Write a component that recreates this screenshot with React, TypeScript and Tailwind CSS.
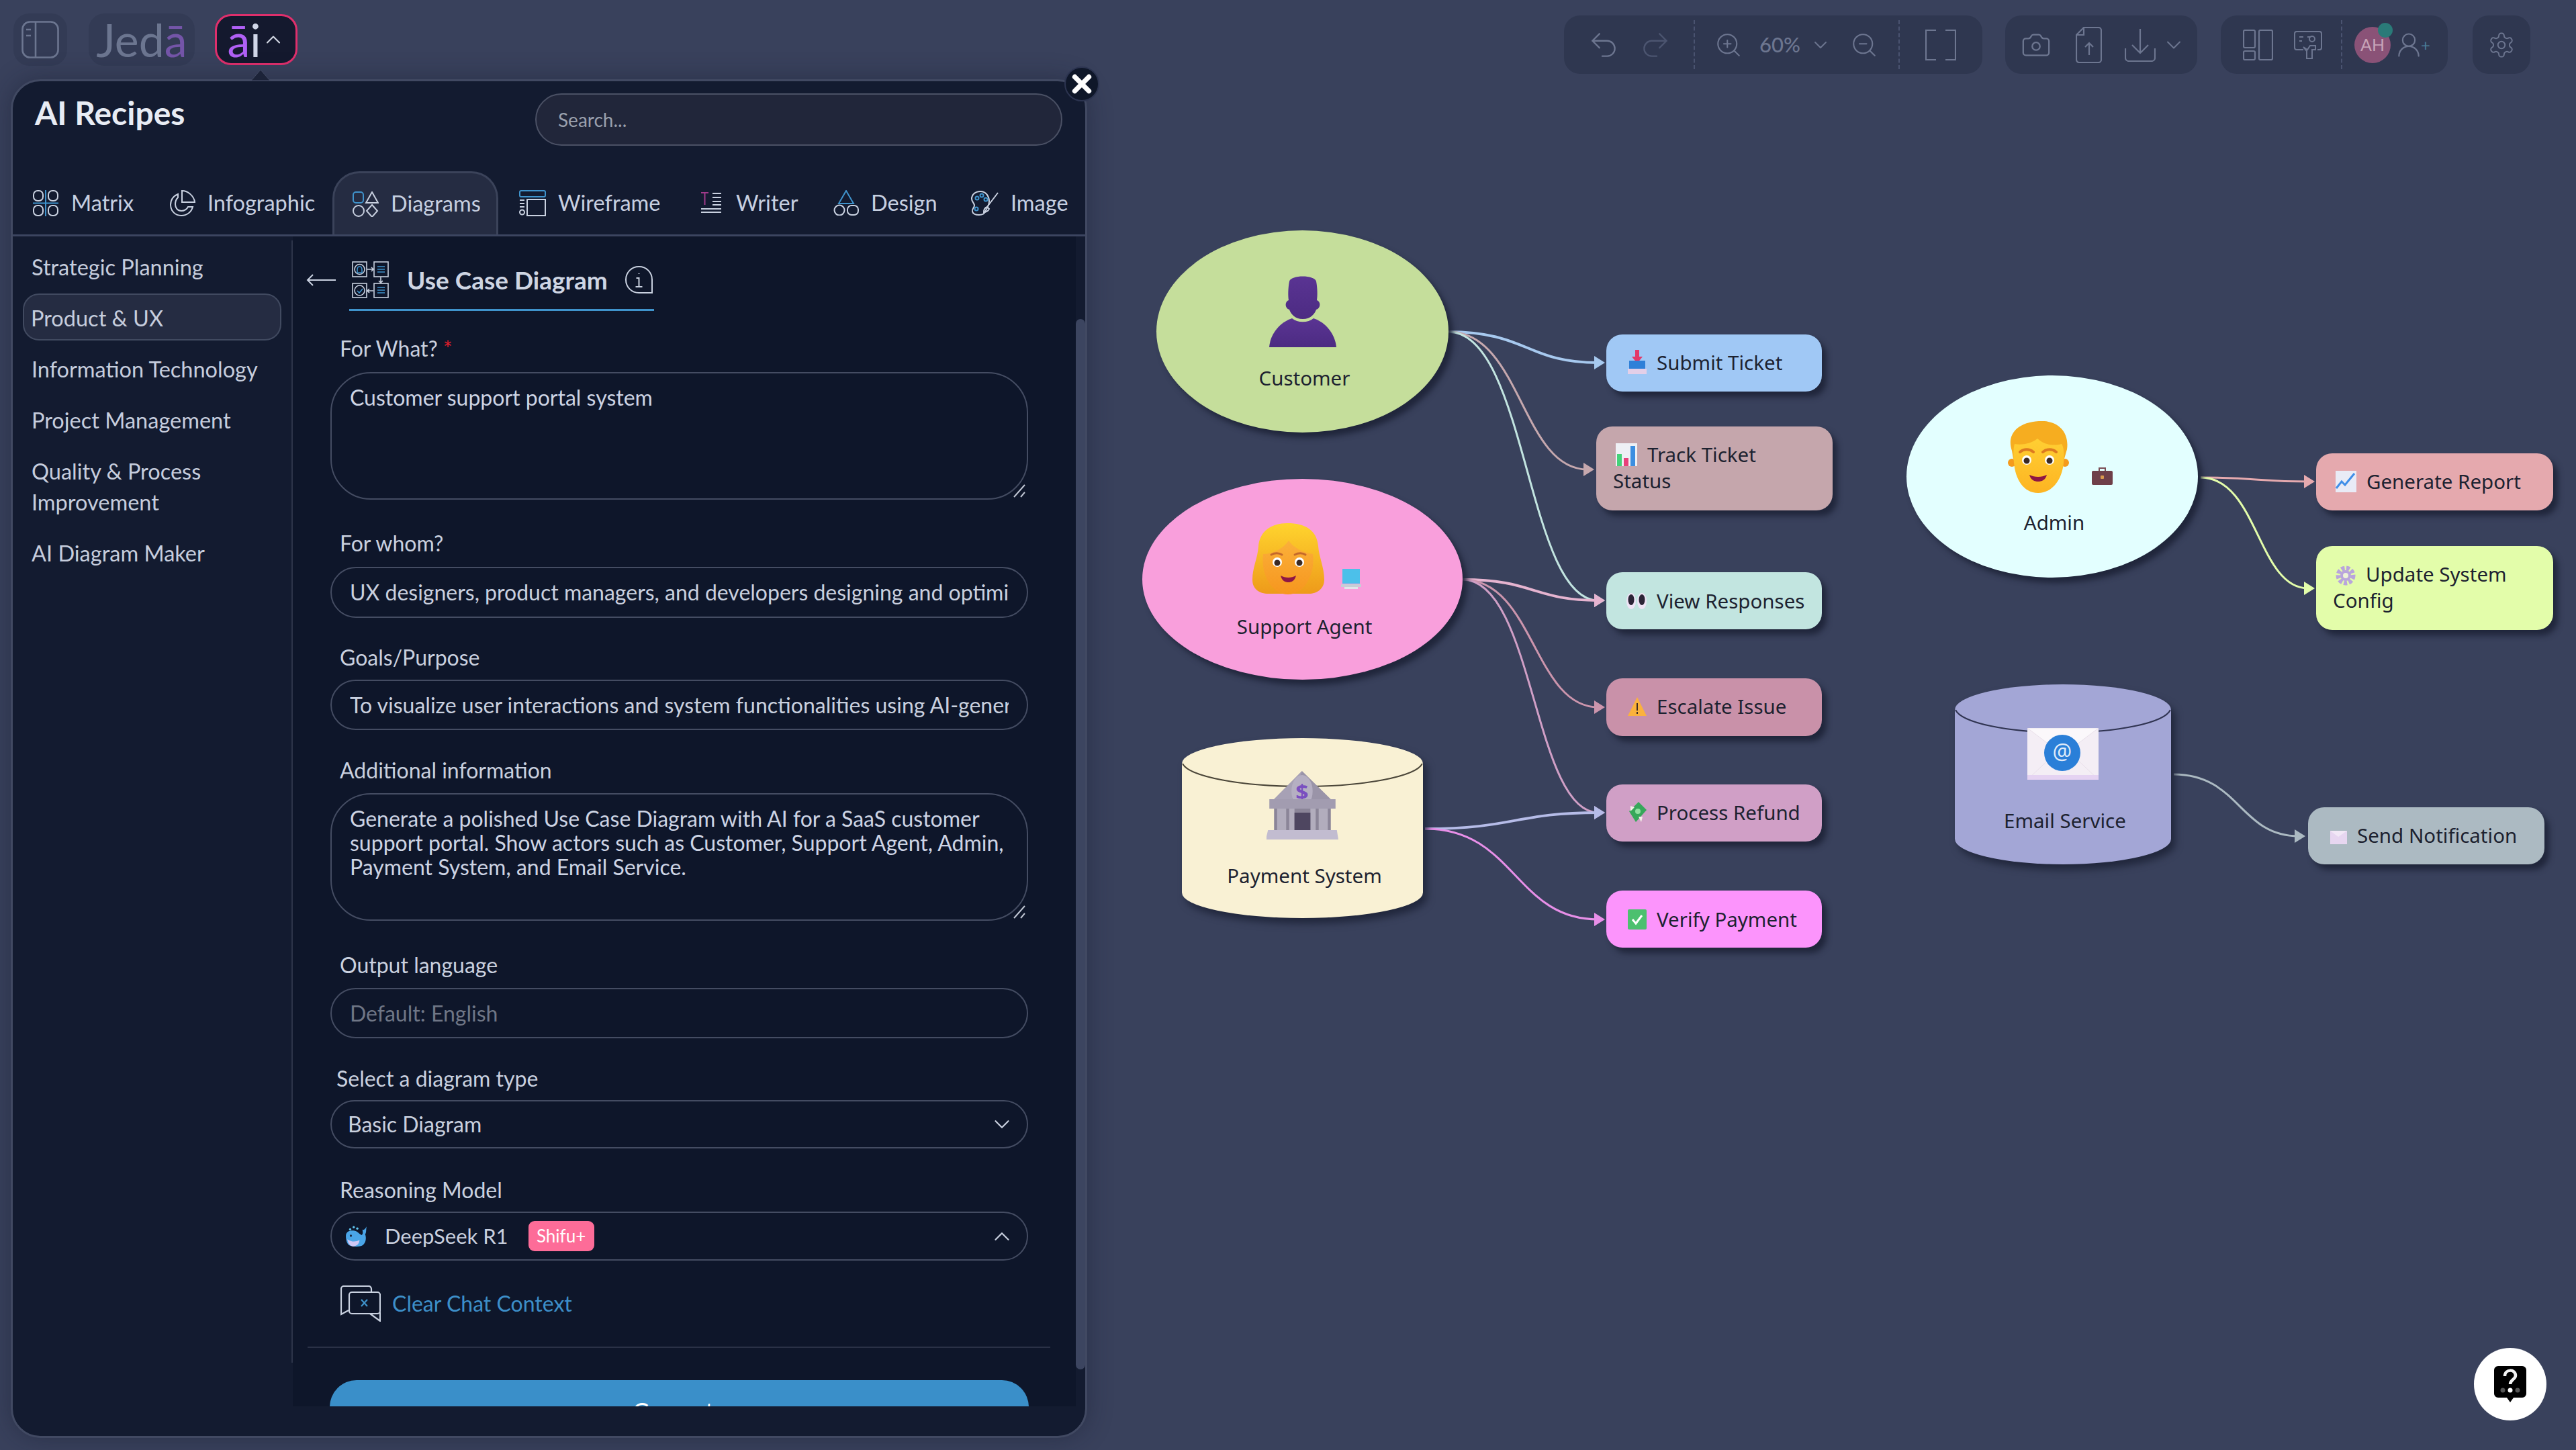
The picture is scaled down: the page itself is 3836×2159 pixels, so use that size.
import React from "react";
import { ChevronDown, ChevronUp, Redo2, Undo2, ZoomIn, ZoomOut, Camera, X, UserRound } from "lucide-react";

const tb = "text-[#6d7690]";

function Divider({ cls }: { cls: string }) {
  return <div className={"h-[73px] w-0 border-l-[2px] border-dashed border-[#4a5370] " + cls} />;
}

function TopLeft() {
  return (
    <div className="flex items-start">
      <div className="flex h-[78px] w-[80px] items-center justify-center rounded-[24px] bg-[#333b55]">
        <svg width="56" height="56" viewBox="0 0 56 56" fill="none" stroke="#6c7690" strokeWidth="2.6">
          <rect x="1.5" y="1.5" width="53" height="53" rx="11" />
          <path d="M21 2v52M7 13h7M7 22h7" />
        </svg>
      </div>
      <div className="ml-[32px] flex h-[78px] w-[158px] items-center justify-center rounded-[24px] bg-[#333b55] text-[68px] font-normal leading-none text-[#6c7690]">
        Jed<span className="text-[#7455a8]">ā</span>
      </div>
      <div className="ml-[30px] mt-[1px] flex h-[76px] w-[123px] items-center justify-center rounded-[24px] border-[3px] border-[#df2f6c] bg-[#14192e] text-[68px] font-normal leading-none text-[#d0d6e8]">
        <span className="text-[#b060f5]">ā</span>i
        <ChevronUp size={36} strokeWidth={1.4} className="text-[#d8dde8]" />
      </div>
    </div>
  );
}

function TopRight() {
  return (
    <div className="mt-[3px] flex items-start">
      <div className={"flex h-[87px] w-[623px] items-center rounded-[24px] bg-[#2f3750] " + tb}>
        <Undo2 size={50} strokeWidth={1.1} className="ml-[34px]" />
        <Redo2 size={50} strokeWidth={1.1} className="ml-[27px] text-[#4c5570]" />
        <Divider cls="ml-[32px]" />
        <ZoomIn size={42} strokeWidth={1.2} className="ml-[29px]" />
        <span className="ml-[25px] w-[58px] text-[31px] font-medium">60%</span>
        <ChevronDown size={32} strokeWidth={1.4} className="ml-[17px]" />
        <ZoomOut size={42} strokeWidth={1.2} className="ml-[28px]" />
        <Divider cls="ml-[30px]" />
        <svg width="46" height="46" viewBox="0 0 46 46" fill="none" stroke="currentColor" strokeWidth="2.2" className="ml-[38px]">
          <path d="M16 1H1v44h15M30 1h15v44H30" />
        </svg>
      </div>
      <div className={"ml-[34px] flex h-[87px] w-[286px] items-center rounded-[24px] bg-[#2f3750] " + tb}>
        <Camera size={46} strokeWidth={1.2} className="ml-[23px]" />
        <svg width="39" height="54" viewBox="0 0 39 54" fill="none" stroke="currentColor" strokeWidth="2.2" className="ml-[36px]">
          <path d="M12 1h22a4 4 0 0 1 4 4v44a4 4 0 0 1-4 4H5a4 4 0 0 1-4-4V12zM12 1v11H1M20 42V24M14 30l6-6 6 6" />
        </svg>
        <svg width="46" height="50" viewBox="0 0 46 50" fill="none" stroke="currentColor" strokeWidth="2.2" className="ml-[34px]">
          <path d="M23 1v36M11 25l12 12 12-12M1 30v14a5 5 0 0 0 5 5h34a5 5 0 0 0 5-5V30" />
        </svg>
        <ChevronDown size={36} strokeWidth={1.3} className="ml-[9px]" />
      </div>
      <div className={"ml-[35px] flex h-[87px] w-[338px] items-center rounded-[24px] bg-[#2f3750] " + tb}>
        <svg width="45" height="46" viewBox="0 0 45 46" fill="none" stroke="currentColor" strokeWidth="2.2" className="ml-[33px]">
          <rect x="1" y="1" width="17" height="26" rx="2" />
          <rect x="1" y="32" width="17" height="13" rx="2" />
          <rect x="24" y="1" width="20" height="44" rx="2" />
        </svg>
        <svg width="42" height="42" viewBox="0 0 42 42" fill="none" stroke="currentColor" strokeWidth="2" className="ml-[31px]">
          <path d="M14 28H4a3 3 0 0 1-3-3V4a3 3 0 0 1 3-3h34a3 3 0 0 1 3 3v21a3 3 0 0 1-3 3h-3M8 9h6M8 15h4M20 9h4" />
          <circle cx="27" cy="12" r="4" />
          <path d="M14 24l6 4 4-6h8v6h-5v13h-8V30z" />
        </svg>
        <Divider cls="ml-[28px]" />
        <div className="relative ml-[18px] flex h-[54px] w-[54px] items-center justify-center rounded-full bg-[#8a5277] text-[25px] text-[#c7a3b8]">
          AH
          <div className="absolute right-[-3px] top-[-6px] h-[22px] w-[22px] rounded-full bg-[#2a7a78]" />
        </div>
        <UserRound size={44} strokeWidth={1.2} className="ml-[5px]" />
        <span className="ml-[-4px] text-[24px] leading-none text-[#4a7c98]">+</span>
      </div>
      <div className={"ml-[37px] flex h-[87px] w-[86px] items-center justify-center rounded-[24px] bg-[#2f3750] " + tb}>
        <svg width="42" height="42" viewBox="0 0 24 24" fill="none" stroke="currentColor" strokeWidth="1.1" strokeLinejoin="round">
          <path d="M12.22 2h-.44a2 2 0 0 0-2 2v.18a2 2 0 0 1-1 1.73l-.43.25a2 2 0 0 1-2 0l-.15-.08a2 2 0 0 0-2.73.73l-.22.38a2 2 0 0 0 .73 2.73l.15.1a2 2 0 0 1 1 1.72v.51a2 2 0 0 1-1 1.74l-.15.09a2 2 0 0 0-.73 2.73l.22.38a2 2 0 0 0 2.73.73l.15-.08a2 2 0 0 1 2 0l.43.25a2 2 0 0 1 1 1.73V20a2 2 0 0 0 2 2h.44a2 2 0 0 0 2-2v-.18a2 2 0 0 1 1-1.73l.43-.25a2 2 0 0 1 2 0l.15.08a2 2 0 0 0 2.73-.73l.22-.39a2 2 0 0 0-.73-2.73l-.15-.08a2 2 0 0 1-1-1.74v-.5a2 2 0 0 1 1-1.74l.15-.09a2 2 0 0 0 .73-2.73l-.22-.38a2 2 0 0 0-2.73-.73l-.15.08a2 2 0 0 1-2 0l-.43-.25a2 2 0 0 1-1-1.73V4a2 2 0 0 0-2-2z" />
          <circle cx="12" cy="12" r="3" />
        </svg>
      </div>
    </div>
  );
}

const W = "#c9d1e0";
const B = "#3f93cc";

function MatrixIcon() {
  return (
    <svg width="39" height="39" viewBox="0 0 39 39" fill="none" stroke={W} strokeWidth="2" className="shrink-0">
      <rect x="1" y="1" width="14" height="15" rx="6" /><rect x="23" y="1" width="14" height="15" rx="6" />
      <rect x="1" y="23" width="14" height="15" rx="6" /><rect x="23" y="23" width="14" height="15" rx="6" />
      <path d="M0 19.5h38M19 0v39" stroke={B} />
    </svg>
  );
}
function InfoGraphicIcon() {
  return (
    <svg width="38" height="39" viewBox="0 0 38 39" fill="none" stroke={W} strokeWidth="2" className="shrink-0">
      <path d="M12 6C5 9 1 15 1 22c0 9 7 16 16 16 8 0 15-5 17-13h-7c-2 4-6 6-10 6-6 0-9-5-9-10 0-5 2-8 4-10z" />
      <path d="M18 1c9 0 18 8 19 17H18z" />
    </svg>
  );
}
function DiagramsIcon() {
  return (
    <svg width="39" height="38" viewBox="0 0 39 38" fill="none" stroke={W} strokeWidth="2" className="shrink-0">
      <rect x="1" y="1" width="15" height="16" rx="4" stroke={B} />
      <path d="M29 1l9 16H20z" />
      <circle cx="9" cy="29" r="8" />
      <path d="M29 20l8 9-8 9-8-9z" />
    </svg>
  );
}
function WireframeIcon() {
  return (
    <svg width="40" height="39" viewBox="0 0 40 39" fill="none" stroke={W} strokeWidth="2" className="shrink-0">
      <rect x="1" y="1" width="38" height="9" rx="2" stroke={B} />
      <rect x="12" y="14" width="27" height="24" />
      <path d="M1 15h7M1 20h7M1 25h7" />
      <circle cx="4.5" cy="33" r="3.5" />
    </svg>
  );
}
function WriterIcon() {
  return (
    <svg width="32" height="32" viewBox="0 0 32 32" fill="none" stroke={W} strokeWidth="2" className="shrink-0">
      <path d="M1 1h11M6.500 1v18" stroke="#a03a8a" />
      <path d="M18 2h13M18 8h13M18 14h13M18 19h13M1 25h30M1 30h30" />
    </svg>
  );
}
function DesignIcon() {
  return (
    <svg width="38" height="38" viewBox="0 0 38 38" fill="none" stroke={W} strokeWidth="2" className="shrink-0">
      <path d="M19 1l11 19H8z" stroke={B} />
      <circle cx="9" cy="30" r="7.500" />
      <rect x="21" y="23" width="16" height="14" rx="6" />
    </svg>
  );
}
function ImageIcon() {
  return (
    <svg width="41" height="37" viewBox="0 0 41 37" fill="none" stroke={W} strokeWidth="2" className="shrink-0">
      <path d="M14 1C6 1 1 6 1 12c0 5 4 6 4 10 0 3-4 5-3 9 1 4 6 5 10 5 5 0 8-2 9-5 1-2 6-9 6-15C27 8 22 1 14 1z" />
      <path d="M40 3L24 24M24 24c-3 1-5 4-5 8 3 0 7-2 8-5z" />
      <circle cx="9" cy="11" r="2.500" stroke={B} /><circle cx="16" cy="7" r="2.500" stroke={B} /><circle cx="22" cy="13" r="2.500" stroke={B} /><circle cx="8" cy="27" r="2.500" stroke={B} />
    </svg>
  );
}
function UseCaseIcon() {
  return (
    <svg width="55" height="55" viewBox="0 0 55 55" fill="none" stroke={W} strokeWidth="1.6" className="shrink-0">
      <rect x="1" y="1" width="21" height="22" /><rect x="33" y="1" width="21" height="22" />
      <rect x="1" y="33" width="21" height="21" /><rect x="33" y="33" width="21" height="21" />
      <circle cx="11.500" cy="12" r="7.500" />
      <circle cx="11.500" cy="43.500" r="7.500" />
      <path d="M8 13c0-7 7-7 7 0v4H8zM8 44l3 3 5-6" stroke={B} />
      <path d="M38 8h11M38 12h11M38 16h11M38 39h11M38 43h11M38 47h11" stroke={B} />
      <path d="M23 12h9M29 9l3 3-3 3M43 24v8M40 29l3 3 3-3M32 44h-9M26 41l-3 3 3 3" />
    </svg>
  );
}

type TabDef = { label: string; icon: React.ReactNode; cls: string; gap: string };
const tabs: TabDef[] = [
  { label: "Matrix", icon: <MatrixIcon />, cls: "w-[204px] ml-[30px]", gap: "gap-[18px]" },
  { label: "Infographic", icon: <InfoGraphicIcon />, cls: "w-[242px]", gap: "gap-[18px]" },
  { label: "Diagrams", icon: <DiagramsIcon />, cls: "w-[247px] pl-[27px] rounded-t-[40px] border-[3px] border-b-0 border-[#3b435a] bg-[#252c42]", gap: "gap-[18px]" },
  { label: "Wireframe", icon: <WireframeIcon />, cls: "w-[301px] pl-[31px]", gap: "gap-[18px]" },
  { label: "Writer", icon: <WriterIcon />, cls: "w-[198px]", gap: "gap-[21px]" },
  { label: "Design", icon: <DesignIcon />, cls: "w-[205px]", gap: "gap-[18px]" },
  { label: "Image", icon: <ImageIcon />, cls: "w-[150px]", gap: "gap-[18px]" },
];

const side = ["Strategic Planning", "Product & UX", "Information Technology", "Project Management"];

function Label({ children, cls = "ml-[70px]" }: { children: React.ReactNode; cls?: string }) {
  return <div className={"h-[40px] text-[32px] leading-[37px] text-[#c9d0df] " + cls}>{children}</div>;
}

const fieldBox = "ml-[56px] w-[1039px] border-[2.5px] border-[#444c62] bg-transparent";

function Area({ text, cls }: { text: string; cls: string }) {
  return (
    <div className={"relative w-fit " + cls}>
      <textarea
        readOnly
        defaultValue={text}
        className={fieldBox + " block h-[190px] resize-none rounded-[60px] px-[27px] pb-[18px] pt-[18px] text-[32px] leading-[36px] text-[#cdd4e4] outline-none"}
      />
      <svg width="22" height="22" viewBox="0 0 22 22" fill="none" stroke="#c3c9d6" strokeWidth="2" className="absolute bottom-[2px] right-[3px]">
        <path d="M4 20L20 2M14 20l6-7" />
      </svg>
    </div>
  );
}

function Line({ text, cls, muted }: { text: string; cls: string; muted?: boolean }) {
  return (
    <div className={fieldBox + " flex items-center rounded-full px-[27px] text-[32px] " + cls}>
      <div className={"overflow-hidden whitespace-nowrap " + (muted ? "text-[#6f7686]" : "text-[#c9d0df]")}>{text}</div>
    </div>
  );
}

function Panel() {
  return (
    <div className="relative -mr-[2px] ml-[16px] flex h-[2023px] w-[1603px] flex-col rounded-[44px] border-[3px] border-[#414962] bg-[#131b30] shadow-[0_0_36px_rgba(20,26,46,0.4)]">
      <svg width="30" height="17" viewBox="0 0 30 17" className="absolute left-[354px] top-[-18px]">
        <path d="M15 1l14 16H1z" fill="#1c2338" stroke="#414962" strokeWidth="1" />
      </svg>
      <div className="absolute left-[1566px] top-[-22px] z-10 flex h-[52px] w-[52px] items-center justify-center rounded-full border-[2px] border-[#2c3450] bg-[#0f1729]">
        <X size={42} strokeWidth={4.2} className="text-white" />
      </div>
      <div className="flex h-[134px] items-start">
        <div className="ml-[33px] mt-[17px] text-[48px] font-bold leading-[60px] text-[#e8ecf4]">AI Recipes</div>
        <div className="ml-auto mr-[34px] mt-[18px] flex h-[78px] w-[785px] items-center rounded-full border-[2.5px] border-[#4b5165] bg-[#21263a] pl-[32px] text-[28px] text-[#9aa0ad]">
          Search...
        </div>
      </div>
      <div className="flex h-[97px] items-end border-b-[3px] border-[#3c4560]">
        {tabs.map((t) => (
          <div key={t.label} className={"flex h-[94px] shrink-0 items-center text-[32.5px] text-[#c6cfe0] " + t.gap + " " + t.cls}>
            {t.icon}
            <span>{t.label}</span>
          </div>
        ))}
      </div>
      <div className="flex min-h-0 flex-1">
        <div className="w-[417px] shrink-0">
          <div className="mt-[6px] flex h-[1671px] flex-col gap-[6px] border-r-[2px] border-[#2d3449] pl-[15px] pr-[15px] pt-[3px] text-[32.5px] text-[#c6cddd]">
            {side.map((s) => (
              <div
                key={s}
                className={
                  "flex h-[70px] shrink-0 items-center rounded-[24px] pt-[4px] " +
                  (s === "Product & UX" ? "border-[2.5px] border-[#414a60] bg-[#252c42] px-[10px]" : "px-[13px]")
                }
              >
                {s}
              </div>
            ))}
            <div className="flex h-[116px] shrink-0 items-center px-[13px] pt-[4px] leading-[46px]">
              Quality &amp; Process
              <br />
              Improvement
            </div>
            <div className="flex h-[70px] shrink-0 items-center px-[13px] pt-[4px]">AI Diagram Maker</div>
          </div>
        </div>
        <div className="h-[1742px] w-[1166px] shrink-0 overflow-hidden bg-[#0e162a]">
          <div className="ml-[20px] mt-[37px] flex h-[55px] items-center">
            <svg width="44" height="20" viewBox="0 0 44 20" fill="none" stroke={W} strokeWidth="2">
              <path d="M44 10H2M10 2L2 10l8 8" />
            </svg>
            <div className="ml-[24px]">
              <UseCaseIcon />
            </div>
            <div className="ml-[27px] w-[325px] text-[37px] font-bold text-[#ced5e3]">Use Case Diagram</div>
            <svg width="41" height="41" viewBox="0 0 41 41" fill="none" stroke={W} strokeWidth="2">
              <path d="M20.500 1C9.500 1 1 9.500 1 20.500S9.500 40 20.500 40H40V20.500C40 9.500 31.500 1 20.500 1z" />
              <path d="M20.500 11v1M16.500 18h4v13M15.500 31h10" />
            </svg>
          </div>
          <div className="ml-[84px] mt-[16px] h-[3px] w-[454px] bg-[#3f93cc]" />
          <Label cls="ml-[70px] mt-[37px]">
            For What? <span className="text-[#e11d2a]">*</span>
          </Label>
          <Area text="Customer support portal system" cls="mt-[14px]" />
          <Label cls="ml-[70px] mt-[46px]">For whom?</Label>
          <Line cls="mt-[14px] h-[76px]" text="UX designers, product managers, and developers designing and optimizing customer support portals" />
          <Label cls="ml-[70px] mt-[40px]">Goals/Purpose</Label>
          <Line cls="mt-[12px] h-[75px]" text="To visualize user interactions and system functionalities using AI-generated use case diagrams" />
          <Label cls="ml-[70px] mt-[41px]">Additional information</Label>
          <Area
            text="Generate a polished Use Case Diagram with AI for a SaaS customer support portal. Show actors such as Customer, Support Agent, Admin, Payment System, and Email Service."
            cls="mt-[13px]"
          />
          <Label cls="ml-[70px] mt-[47px]">Output language</Label>
          <Line cls="mt-[13px] h-[75px]" muted text="Default: English" />
          <Label cls="ml-[65px] mt-[41px]">Select a diagram type</Label>
          <div className={fieldBox + " mt-[11px] flex h-[72px] items-center justify-between rounded-full pl-[24px] pr-[18px] text-[32px] text-[#c9d0df]"}>
            Basic Diagram
            <ChevronDown size={38} strokeWidth={1.4} className="text-[#c9d0df]" />
          </div>
          <Label cls="ml-[70px] mt-[43px]">Reasoning Model</Label>
          <div className={fieldBox + " mt-[11px] flex h-[73px] items-center rounded-full pl-[20px] pr-[18px] text-[31px] text-[#c9d0df]"}>
            <svg width="34" height="34" viewBox="0 0 32 32">
              <circle cx="7" cy="6" r="1.600" fill="#5fc4ee" /><circle cx="12" cy="3" r="1.600" fill="#5fc4ee" /><circle cx="17" cy="5" r="1.600" fill="#5fc4ee" />
              <path d="M1 15c0-6 6-8 12-7 5 1 7 5 10 6 2-1 2-4 1-8 1 2 4 0 6-4-1 5 0 8-2 11 2 5 1 12-3 15-3 3-16 3-20 0C2 25 1 20 1 15z" fill="#4aa5e8" />
              <path d="M3 20c6 4 12 4 17 1 0 5-3 8-8 9-5 0-8-4-9-10z" fill="#cfc7f5" />
              <circle cx="8" cy="15" r="1.500" fill="#1c2338" />
            </svg>
            <span className="ml-[25px]">DeepSeek R1</span>
            <span className="ml-[30px] flex h-[45px] w-[98px] items-center justify-center rounded-[9px] bg-[#fd6c98] text-[26px] text-white">Shifu+</span>
            <ChevronUp size={38} strokeWidth={1.4} className="ml-auto text-[#c9d0df]" />
          </div>
          <div className="ml-[71px] mt-[37px] flex h-[53px] items-center">
            <svg width="60" height="54" viewBox="0 0 60 54" fill="none" stroke={W} strokeWidth="2.2">
              <path d="M46 9V5a4 4 0 0 0-4-4H5a4 4 0 0 0-4 4v38l11-6" />
              <rect x="13" y="10" width="46" height="32" rx="4" />
              <path d="M44 42l15 11V40" />
              <path d="M31 21l9 10M40 21l-9 10" stroke={B} />
            </svg>
            <span className="ml-[17px] text-[32px] text-[#3d8fc9]">Clear Chat Context</span>
          </div>
          <div className="ml-[22px] mt-[38px] h-[2px] w-[1106px] bg-[#2a3146]" />
          <div className="ml-[55px] mt-[48px] flex h-[90px] w-[1041px] items-center justify-center rounded-[40px] bg-[#3a8fc9] text-[34px] text-white">
            Generate
          </div>
        </div>
        <div className="w-[14px] shrink-0 pt-[123px]">
          <div className="h-[1564px] w-full rounded-full bg-[#3c4560]" />
        </div>
      </div>
    </div>
  );
}

/* ---------- emoji drawings ---------- */
function Person() {
  return (
    <svg width="100" height="108" viewBox="0 0 100 108">
      <defs>
        <linearGradient id="pg" x1="0" x2="0" y1="0" y2="1"><stop offset="0" stopColor="#5a3493" /><stop offset="1" stopColor="#4c2b82" /></linearGradient>
      </defs>
      <path fill="url(#pg)" d="M30 10C32 0 68 0 70 10c2 10 2 22 1 28 6 2 6 12-1 14-2 6-8 14-20 14s-18-8-20-14c-7-2-7-12-1-14-1-6-1-18 1-28z" />
      <path fill="url(#pg)" d="M0 108c2-22 18-38 34-43 8 7 24 7 32 0 16 5 32 21 34 43z" />
    </svg>
  );
}
function Woman() {
  return (
    <svg width="107" height="106" viewBox="0 0 107 106">
      <defs>
        <linearGradient id="wh" x1="0" x2="0" y1="0" y2="1"><stop offset="0" stopColor="#ffd42e" /><stop offset="1" stopColor="#ee9a1a" /></linearGradient>
        <linearGradient id="wf" x1="0" x2="0" y1="0" y2="1"><stop offset="0" stopColor="#fbb03a" /><stop offset="1" stopColor="#f6961e" /></linearGradient>
      </defs>
      <path fill="url(#wh)" d="M52 0c26 0 44 10 46 34 1 16 9 32 9 50 0 14-11 21-23 21H24C10 105 0 98 0 84c0-18 8-32 9-50C11 12 28 0 52 0z" />
      <path fill="url(#wf)" d="M16 46c14 0 30-8 38-20 8 12 24 18 36 20 4 32-14 60-37 60S12 78 16 46z" />
      <circle cx="37" cy="58" r="7" fill="#fff" /><circle cx="70" cy="58" r="7" fill="#fff" />
      <circle cx="37" cy="59" r="4.500" fill="#3a2a24" /><circle cx="70" cy="59" r="4.500" fill="#3a2a24" />
      <path d="M28 47c5-3 12-3 16 0M63 47c5-3 12-3 16 0" fill="none" stroke="#c4692a" strokeWidth="3" strokeLinecap="round" />
      <path d="M42 78c7 4 16 4 23 0-2 8-7 10-11.500 10S44 86 42 78z" fill="#8e1645" />
    </svg>
  );
}
function Man() {
  return (
    <svg width="91" height="107" viewBox="0 0 91 107">
      <defs>
        <linearGradient id="mf" x1="0" x2="0" y1="0" y2="1"><stop offset="0" stopColor="#ffcf33" /><stop offset="1" stopColor="#fdb422" /></linearGradient>
      </defs>
      <path fill="#f6ad20" d="M6 44C-2 22 12 2 46 0c26-2 46 14 42 42l-4 14H8z" />
      <circle cx="6" cy="62" r="6" fill="#f59b1c" /><circle cx="85" cy="62" r="6" fill="#f59b1c" />
      <path fill="url(#mf)" d="M10 34c10 2 24 0 34-8 8 8 22 12 36 8 4 6 4 18 3 28-2 24-16 45-38 45S11 86 9 62c-1-10-1-22 1-28z" />
      <circle cx="28" cy="58" r="7" fill="#fff" /><circle cx="62" cy="58" r="7" fill="#fff" />
      <circle cx="28" cy="59" r="4.500" fill="#3a2a24" /><circle cx="62" cy="59" r="4.500" fill="#3a2a24" />
      <path d="M18 46c6-5 14-5 20 0M52 46c6-5 14-5 20 0" fill="none" stroke="#dd7a20" strokeWidth="4" strokeLinecap="round" />
      <path d="M32 80c8 4 18 4 26 0-2 8-8 10-13 10s-11-2-13-10z" fill="#8e1645" />
    </svg>
  );
}
function Bank() {
  return (
    <svg width="107" height="102" viewBox="6 0 95 102" preserveAspectRatio="none">
      <path d="M53 0l38 42 6 0v14H10V42h6z" fill="#9a94a8" />
      <path d="M53 0L16 42h24z" fill="#a7a1b5" />
      <ellipse cx="53" cy="30" rx="14" ry="24" fill="#b5afc2" />
      <text x="53" y="42" textAnchor="middle" fontSize="30" fontWeight="700" fill="#7a4fc0">$</text>
      <rect x="10" y="42" width="87" height="14" fill="#a29cb0" />
      <rect x="16" y="56" width="75" height="32" fill="#8b8598" />
      <rect x="20" y="56" width="12" height="32" fill="#b2adbd" /><rect x="75" y="56" width="12" height="32" fill="#b2adbd" />
      <rect x="36" y="56" width="7" height="32" fill="#b2adbd" /><rect x="64" y="56" width="7" height="32" fill="#b2adbd" />
      <rect x="43" y="62" width="21" height="26" fill="#4e4660" />
      <path d="M8 88h91l2 14H5z" fill="#c2bcd0" />
    </svg>
  );
}
function Envelope() {
  return (
    <svg width="106" height="77" viewBox="0 0 106 77">
      <rect width="106" height="77" rx="3" fill="#f4eef5" />
      <path d="M0 0l53 40L106 0zM0 77l40-38M106 77L66 39" fill="#fbf8fb" stroke="#e8dfe9" strokeWidth="1" />
      <rect y="70" width="106" height="7" fill="#e5d3f2" />
      <circle cx="52" cy="37" r="27" fill="#2a7fd8" />
      <text x="52" y="47" textAnchor="middle" fontSize="32" fill="#dfeaf8">@</text>
    </svg>
  );
}
function Computer() {
  return (
    <svg width="32" height="30" viewBox="0 0 32 30">
      <rect x="3" width="26" height="22" fill="#4cc0ea" />
      <path d="M1 23h30v4H1z" fill="#c7cdd6" />
      <path d="M6 27h20v3H6z" fill="#e2e6ea" />
    </svg>
  );
}
function Briefcase() {
  return (
    <svg width="31" height="26" viewBox="0 0 31 26">
      <path d="M11 5V1h9v4" fill="none" stroke="#7a4d55" strokeWidth="2" />
      <rect y="5" width="31" height="21" rx="2" fill="#6e3f49" />
      <rect x="13" y="12" width="5" height="5" rx="1" fill="#d99a4e" />
    </svg>
  );
}

const iconCls = "mr-[15px] inline-block align-[-6px]";
const Ico = {
  inbox: (
    <svg width="28" height="36" viewBox="0 0 28 36" className={iconCls}>
      <path d="M11 0h6v10h5L14 20 6 10h5z" fill="#e23a6a" />
      <path d="M2 16h24v14H2z" fill="#2f80d8" /><path d="M0 28h28v8H0z" fill="#e3cfe8" />
    </svg>
  ),
  chart: (
    <svg width="32" height="34" viewBox="0 0 32 34" className={iconCls}>
      <rect width="32" height="34" fill="#eef0f5" />
      <rect x="2" y="16" width="7" height="18" fill="#45d27a" /><rect x="12" y="22" width="7" height="12" fill="#e8417a" /><rect x="22" y="4" width="7" height="30" fill="#3c8ee0" />
    </svg>
  ),
  eyes: (
    <svg width="30" height="26" viewBox="0 0 30 26" className={iconCls}>
      <ellipse cx="7" cy="13" rx="7" ry="12" fill="#eee4f5" /><ellipse cx="23" cy="13" rx="7" ry="12" fill="#eee4f5" />
      <ellipse cx="7" cy="11" rx="4.500" ry="8" fill="#2b2436" /><ellipse cx="23" cy="11" rx="4.500" ry="8" fill="#2b2436" />
    </svg>
  ),
  warn: (
    <svg width="28" height="28" viewBox="0 0 28 28" className={iconCls}>
      <path d="M14 0l14 28H0z" fill="#fbb23c" /><path d="M13 9h2v11h-2zM13 22h2v3h-2z" fill="#3a2a24" />
    </svg>
  ),
  money: (
    <svg width="28" height="30" viewBox="0 0 28 30" className={iconCls}>
      <path d="M16 0l12 12-16 18L2 14z" fill="#37a75a" /><path d="M4 6l6 2-6 6zM22 22l-6 0 4 8z" fill="#f3f0e8" /><circle cx="15" cy="14" r="4" fill="#8fe0a0" />
    </svg>
  ),
  check: (
    <svg width="28" height="30" viewBox="0 0 28 30" className={iconCls}>
      <rect width="28" height="30" rx="2" fill="#4dc06f" /><path d="M7 15l5 6 9-12" fill="none" stroke="#fff" strokeWidth="3" />
    </svg>
  ),
  growth: (
    <svg width="31" height="32" viewBox="0 0 31 32" className={iconCls}>
      <rect width="31" height="32" fill="#e9ebf6" /><path d="M1 26l8-10 5 5L28 4" fill="none" stroke="#3f8ee8" strokeWidth="3" />
    </svg>
  ),
  gear: (
    <svg width="30" height="30" viewBox="0 0 30 30" className={iconCls}>
      <circle cx="15" cy="15" r="11" fill="none" stroke="#b9a5dc" strokeWidth="7" strokeDasharray="5 2.500" />
      <circle cx="15" cy="15" r="8" fill="#b9a5dc" /><circle cx="15" cy="15" r="4" fill="#eef3d8" />
    </svg>
  ),
  mail: (
    <svg width="25" height="20" viewBox="0 0 25 20" className={iconCls + " mt-[8px]"}>
      <rect width="25" height="20" fill="#e7d6f0" /><path d="M0 0l12 9L25 0" fill="#f2e8f6" />
    </svg>
  ),
};

function Pill({ cls, color, children }: { cls: string; color: string; children: React.ReactNode }) {
  return (
    <div className={"absolute rounded-[24px] text-[29.5px] leading-[39px] text-[#1d2230] shadow-[7px_8px_8px_#20263b] " + cls + " " + color}>
      {children}
    </div>
  );
}

function Cylinder({ w, fill, stroke }: { w: number; fill: string; stroke: string }) {
  const r = w / 2;
  return (
    <svg width={w} height="268" viewBox={`0 0 ${w} 268`} className="absolute left-0 top-0 drop-shadow-[6px_8px_6px_#20263b]">
      <path d={`M0 38A${r} 38 0 0 1 ${w} 38V230A${r} 38 0 0 1 0 230Z`} fill={fill} />
      <path d={`M1 38A${r} 38 0 0 0 ${w - 1} 38`} fill="none" stroke={stroke} strokeWidth="2" />
    </svg>
  );
}

type Edge = [number, number, number, number, string, number];
const edges: Edge[] = [
  [2157, 494, 2390, 540, "#a7c9ef", 4],
  [2157, 494, 2374, 699, "#c6a8ae", 3],
  [2157, 494, 2390, 894, "#c2e4e0", 3],
  [2178, 863, 2390, 894, "#e6b4d0", 4],
  [2178, 863, 2390, 1053, "#cc95ad", 3],
  [2178, 863, 2390, 1210, "#d09fc6", 3],
  [2122, 1234, 2390, 1210, "#b6bce8", 4],
  [2122, 1234, 2390, 1369, "#e88fe8", 3],
  [3277, 711, 3447, 717, "#e5a9ae", 3],
  [3277, 711, 3447, 876, "#e3fdaa", 3],
  [3237, 1153, 3433, 1245, "#acbac2", 3],
];

function Canvas() {
  return (
    <div className="relative min-w-0 flex-1">
      <svg width="2219" height="2023" viewBox="1617 118 2219 2023" fill="none" className="absolute left-0 top-0">
        {edges.map(([sx, sy, tx, ty, c, sw], i) => {
          const mx = (sx + tx) / 2;
          return (
            <g key={i}>
              <path d={`M${sx} ${sy}C${mx} ${sy} ${mx} ${ty} ${tx - 10} ${ty}`} stroke={c} strokeWidth={sw} />
              <path d={`M${tx} ${ty}l-16 -10v20z`} fill={c} />
            </g>
          );
        })}
      </svg>

      <div className="absolute left-[105px] top-[225px] flex h-[301px] w-[435px] flex-col items-center rounded-[50%] bg-[#c5de9b] pt-[66px] shadow-[7px_8px_8px_#20263b]">
        <Person />
        <div className="ml-[6px] mt-[26px] text-[29.5px] leading-[40px] text-[#1d2230]">Customer</div>
      </div>

      <div className="absolute left-[84px] top-[595px] flex h-[299px] w-[477px] flex-col items-center rounded-[50%] bg-[#f99fdc] pt-[66px] shadow-[7px_8px_8px_#20263b]">
        <div className="ml-[14px] flex h-[106px] items-end gap-[24px]">
          <Woman />
          <div className="mb-[8px]"><Computer /></div>
        </div>
        <div className="ml-[6px] mt-[28px] text-[29.5px] leading-[40px] text-[#1d2230]">Support Agent</div>
      </div>

      <div className="absolute left-[143px] top-[981px] h-[268px] w-[359px]">
        <Cylinder w={359} fill="#f9f1d4" stroke="#4a4538" />
        <div className="relative flex flex-col items-center pt-[49px]">
          <Bank />
          <div className="ml-[6px] mt-[34px] text-[29.5px] leading-[40px] text-[#1d2230]">Payment System</div>
        </div>
      </div>

      <div className="absolute left-[1222px] top-[441px] flex h-[301px] w-[434px] flex-col items-center rounded-[50%] bg-[#e3ffff] pt-[68px] shadow-[7px_8px_8px_#20263b]">
        <div className="ml-[24px] flex h-[107px] items-end gap-[34px]">
          <Man />
          <div className="mb-[12px]"><Briefcase /></div>
        </div>
        <div className="ml-[6px] mt-[24px] text-[29.5px] leading-[40px] text-[#1d2230]">Admin</div>
      </div>

      <div className="absolute left-[1294px] top-[901px] h-[268px] w-[322px]">
        <Cylinder w={322} fill="#a3a6d6" stroke="#2f3350" />
        <div className="relative flex flex-col items-center pt-[65px]">
          <Envelope />
          <div className="ml-[6px] mt-[41px] text-[29.5px] leading-[40px] text-[#1d2230]">Email Service</div>
        </div>
      </div>

      <Pill cls="left-[775px] top-[380px] flex h-[85px] w-[321px] items-center pb-[3px] pl-[32px]" color="bg-[#a0c8f5]">{Ico.inbox}Submit Ticket</Pill>
      <Pill cls="left-[760px] top-[517px] flex h-[125px] w-[352px] items-center pb-[3px] pl-[25px]" color="bg-[#c5a6ac]"><div><span className="ml-[4px]" />{Ico.chart}Track Ticket<br />Status</div></Pill>
      <Pill cls="left-[775px] top-[734px] flex h-[85px] w-[321px] items-center pl-[30px]" color="bg-[#c2e5e0]">{Ico.eyes}View Responses</Pill>
      <Pill cls="left-[775px] top-[892px] flex h-[86px] w-[321px] items-center pb-[3px] pl-[32px]" color="bg-[#c991a9]">{Ico.warn}Escalate Issue</Pill>
      <Pill cls="left-[775px] top-[1050px] flex h-[85px] w-[321px] items-center pb-[3px] pl-[32px]" color="bg-[#d09fc6]">{Ico.money}Process Refund</Pill>
      <Pill cls="left-[775px] top-[1208px] flex h-[85px] w-[321px] items-center pl-[32px]" color="bg-[#fc94fc]">{Ico.check}Verify Payment</Pill>
      <Pill cls="left-[1832px] top-[557px] flex h-[85px] w-[353px] items-center pb-[2px] pl-[29px]" color="bg-[#e5a9ae]">{Ico.growth}Generate Report</Pill>
      <Pill cls="left-[1832px] top-[695px] flex h-[125px] w-[353px] items-center pb-[3px] pl-[25px]" color="bg-[#e3fdaa]"><div><span className="ml-[4px]" />{Ico.gear}Update System<br />Config</div></Pill>
      <Pill cls="left-[1820px] top-[1084px] flex h-[85px] w-[352px] items-center pb-[3px] pl-[33px]" color="bg-[#acbac2]">{Ico.mail}Send Notification</Pill>

      <div className="absolute left-[2067px] top-[1889px] flex h-[108px] w-[108px] items-center justify-center rounded-full bg-white">
        <svg width="48" height="54" viewBox="0 0 48 54">
          <path d="M6 0h36a6 6 0 0 1 6 6v35a6 6 0 0 1-6 6H29l-5 7-5-7H6a6 6 0 0 1-6-6V6a6 6 0 0 1 6-6z" fill="#000" />
          <path d="M16 15c0-11 16-11 16-1 0 6-8 6-8 13" fill="none" stroke="#f3f3f3" strokeWidth="4.500" />
          <circle cx="24" cy="36" r="3.500" fill="#fff" /><circle cx="13" cy="36" r="3.500" fill="#555" /><circle cx="35" cy="36" r="3.500" fill="#555" />
        </svg>
      </div>
    </div>
  );
}

export default function App() {
  return (
    <div className="flex h-[2159px] w-[3836px] flex-col overflow-hidden bg-[#39415c] font-[Lato,sans-serif]">
      <div className="flex h-[118px] shrink-0 items-start justify-between pl-[20px] pr-[68px] pt-[20px]">
        <TopLeft />
        <TopRight />
      </div>
      <div className="flex min-h-0 flex-1">
        <Panel />
        <div className="flex min-w-0 flex-1 font-['Noto_Sans',sans-serif]">
          <Canvas />
        </div>
      </div>
    </div>
  );
}
